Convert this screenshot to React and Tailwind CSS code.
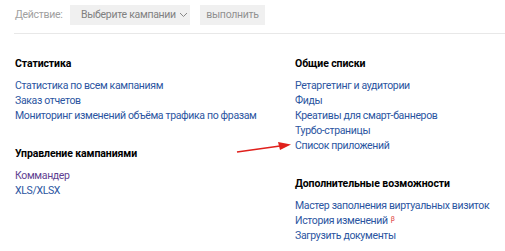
import React from "react";

const font = { fontFamily: 'Roboto, "Noto Sans", Arial, sans-serif' };

function Link({ children, visited }) {
  return (
    <a className={`block whitespace-nowrap text-[10.5px] tracking-[-0.35px] leading-[15px] ${visited ? "text-[#5f3f91]" : "text-[#2b55a1]"}`}>{children}</a>
  );
}

function Heading({ children }) {
  return <div className="whitespace-nowrap text-[10.5px] tracking-[-0.1px] leading-[16px] font-bold text-black mb-[6px]">{children}</div>;
}

export default function App() {
  return (
    <div className="w-[505px] h-[251px] bg-white relative overflow-hidden" style={font}>
      <div className="flex items-center h-[20px] mt-[5px] pl-[15px] whitespace-nowrap text-[10.5px] tracking-[-0.3px]">
        <span className="text-[#a0a0a0] w-[55px] shrink-0">Действие:</span>
        <div className="h-[20px] w-[120px] shrink-0 bg-[#f0f0f0] flex items-center pl-[11px] text-[#808080]">
          Выберите кампании
          <svg width="9" height="6" viewBox="0 0 9 6" className="ml-[3px]"><path d="M1 1l3.5 3.5L8 1" fill="none" stroke="#888" strokeWidth="1" /></svg>
        </div>
        <div className="h-[20px] w-[65px] shrink-0 ml-[10px] bg-[#f0f0f0] flex items-center justify-center text-[#909090]">выполнить</div>
      </div>
      <div className="ml-[14px] mt-[8px] h-px bg-[#e8e8e8]" />
      <div className="flex pl-[15px] mt-[22px]">
        <div className="w-[280px] shrink-0">
          <Heading>Статистика</Heading>
          <Link>Статистика по всем кампаниям</Link>
          <Link>Заказ отчетов</Link>
          <Link>Мониторинг изменений объёма трафика по фразам</Link>
          <div className="mt-[23px]">
            <Heading>Управление кампаниями</Heading>
            <Link visited>Коммандер</Link>
            <Link>XLS/XLSX</Link>
          </div>
        </div>
        <div>
          <Heading>Общие списки</Heading>
          <Link>Ретаргетинг и аудитории</Link>
          <Link>Фиды</Link>
          <Link>Креативы для смарт-баннеров</Link>
          <Link>Турбо-страницы</Link>
          <Link>Список приложений</Link>
          <div className="mt-[23px]">
            <Heading>Дополнительные возможности</Heading>
            <Link>Мастер заполнения виртуальных визиток</Link>
            <a className="block whitespace-nowrap text-[10.5px] tracking-[-0.35px] leading-[15px] text-[#2b55a1]">История изменений<sup className="text-[#e0403a] text-[7px] ml-[3px]">β</sup></a>
            <Link>Загрузить документы</Link>
          </div>
        </div>
      </div>
      <svg className="absolute left-[236px] top-[140px]" width="56" height="16" viewBox="0 0 56 16">
        <path d="M1 12 L44 6" stroke="#e0201c" strokeWidth="1.6" fill="none" />
        <path d="M42 2 L55 4.5 L44 10 Z" fill="#e0201c" />
      </svg>
    </div>
  );
}
